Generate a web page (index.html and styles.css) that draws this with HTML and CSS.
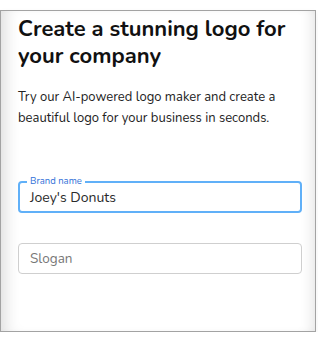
FILE: index.html
```html
<!DOCTYPE html>
<html>
<head>
<meta charset="utf-8">
<link rel="stylesheet" href="styles.css">
</head>
<body>
<div class="card">
  <h1 class="title">Create a stunning logo for your company</h1>
  <p class="lead">Try our AI-powered logo maker and create a beautiful logo for your business in seconds.</p>
  <div class="field field-active">
    <span class="field-label">Brand name</span>
    <span class="field-value">Joey's Donuts</span>
  </div>
  <div class="field">
    <span class="field-placeholder">Slogan</span>
  </div>
</div>
</body>
</html>
```
FILE: styles.css
```css
html, body {
  margin: 0;
  padding: 0;
  background: #ffffff;
}
body {
  font-family: "Nunito", "Lato", "Noto Sans", sans-serif;
  color: #111;
}
.card {
  box-sizing: border-box;
  margin-top: 10px;
  width: 316px;
  height: 322px;
  border: 1px solid #a3a3a3;
  background: #fff;
  box-shadow: inset 14px 0 16px -10px rgba(0,0,0,0.14), inset -12px 0 14px -10px rgba(0,0,0,0.12), 0 4px 8px rgba(0,0,0,0.06);
  padding: 5px 14px 0 17px;
}
.title {
  margin: 0;
  font-size: 22px;
  line-height: 27px;
  font-weight: 700;
  color: #111;
  letter-spacing: 0;
}
.lead {
  margin: 17px 0 0;
  font-size: 13px;
  line-height: 21px;
  color: #222;
}
.field {
  position: relative;
  box-sizing: border-box;
  height: 31px;
  width: 284px;
  border: 1px solid #cfcfcf;
  border-radius: 4px;
  display: flex;
  align-items: center;
  padding-left: 11px;
  margin-top: 30px;
}
.field-active {
  margin-top: 52px;
  border: 2px solid #60b0f8;
  padding-left: 10px;
  height: 32px;
}
.field-label {
  position: absolute;
  top: -9px;
  left: 7px;
  padding: 0 3px;
  background: #fff;
  font-size: 9.5px;
  line-height: 14px;
  color: #2f6fd8;
}
.field-value {
  font-size: 14px;
  color: #2a2a2a;
}
.field-placeholder {
  font-size: 13.5px;
  color: #777;
}
```
